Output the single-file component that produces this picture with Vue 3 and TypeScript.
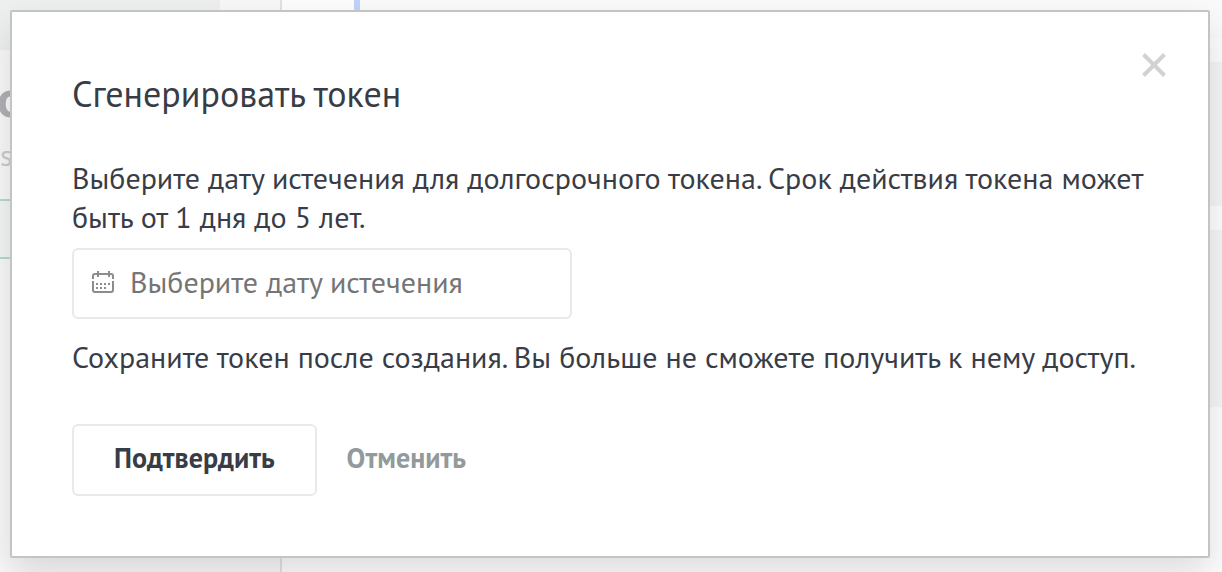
<script setup lang="ts">
import { ref } from 'vue'

const expiry = ref('')
const open = ref(true)
</script>

<template>
  <div class="page">
    <div class="backdrop" aria-hidden="true">
      <div class="sidebar">
        <div class="sidebar-head"></div>
        <div class="sidebar-title">о</div>
        <div class="sidebar-sub">s</div>
        <div class="sidebar-active"></div>
      </div>
      <div class="content">
        <div class="tab-mark"></div>
        <div class="cards">
          <div class="card card-top"></div>
          <div class="card card-first"></div>
          <div class="card card-second"></div>
        </div>
      </div>
    </div>

    <section v-if="open" class="dialog" role="dialog" aria-modal="true" aria-labelledby="dialog-title">
      <button class="close" type="button" aria-label="Закрыть" @click="open = false">
        <svg width="24" height="26" viewBox="0 0 24 26" fill="none" stroke="#d3d2d0" stroke-width="4">
          <path d="M1.5 2.5 22.5 23.5M22.5 2.5 1.5 23.5" />
        </svg>
      </button>
      <h1 id="dialog-title">Сгенерировать токен</h1>
      <label class="intro" for="expiry">Выберите дату истечения для долгосрочного токена. Срок действия токена может быть от 1 дня до 5 лет.</label>
      <div class="field">
        <svg width="22" height="22" viewBox="0 0 22 22" fill="none" stroke="#8c8c8c" stroke-width="2">
          <path d="M1 8V5Q1 3 3 3H19Q21 3 21 5V8M1 10V19Q1 21 3 21H19Q21 21 21 19V10M6 0V6M17 0V6" />
          <path stroke-dasharray="2 2" d="M4 13H18M4 17H14" />
        </svg>
        <input id="expiry" v-model="expiry" type="text" placeholder="Выберите дату истечения" />
      </div>
      <p class="note">Сохраните токен после создания. Вы больше не сможете получить к нему доступ.</p>
      <div class="actions">
        <button class="confirm" type="button">Подтвердить</button>
        <button class="cancel" type="button" @click="open = false">Отменить</button>
      </div>
    </section>
  </div>
</template>

<style>
body {
  background: #f4f4f4;
}
</style>

<style scoped>
* {
  box-sizing: border-box;
}
.page {
  position: relative;
  min-height: 100vh;
  padding: 10px 12px 14px 10px;
  overflow: hidden;
  font-family: "PT Sans", "Noto Sans", sans-serif;
  color: #383c46;
}
.backdrop {
  position: absolute;
  inset: 0;
  display: flex;
}
.sidebar {
  width: 282px;
  border-right: 2px solid #e2e2e2;
  background: #f8f8f8;
}
.sidebar-head {
  width: 220px;
  height: 50px;
  background: #edf0ee;
}
.sidebar-title {
  height: 85px;
  padding-top: 18px;
  font-size: 52px;
  font-weight: 700;
  line-height: 60px;
  text-indent: -3px;
  color: #afb0b4;
}
.sidebar-sub {
  height: 64px;
  font-size: 30px;
  line-height: 40px;
  color: #cbcbcb;
}
.sidebar-active {
  height: 60px;
  border: solid #b3dcca;
  border-width: 2px 0;
  background: #f2f5f4;
}
.content {
  flex: 1;
  display: flex;
  background: #fdfdfd;
}
.tab-mark {
  width: 6px;
  height: 50px;
  margin-left: 72px;
  background: #bfd3fa;
}
.cards {
  flex: 1;
  display: flex;
  flex-direction: column;
  gap: 24px;
}
.card {
  background: #f5f5f5;
}
.card-top {
  height: 38px;
  background: #fafafa;
}
.card-first {
  height: 144px;
}
.card-second {
  height: 177px;
}
.dialog {
  position: relative;
  min-height: 548px;
  padding: 57px 60px 60px;
  border: 2px solid #c4c4c4;
  border-radius: 2px;
  background: #fff;
  box-shadow: 0 16px 36px rgba(0, 0, 0, 0.13);
}
.close {
  position: absolute;
  top: 40px;
  right: 42px;
  padding: 0;
  border: 0;
  background: none;
  line-height: 0;
  cursor: pointer;
}
h1 {
  margin: 0 0 39px;
  font-size: 36px;
  font-weight: 400;
  line-height: 50px;
}
.intro {
  display: block;
  font-size: 30px;
  line-height: 39px;
}
.field {
  display: flex;
  align-items: center;
  gap: 16px;
  width: 500px;
  max-width: 100%;
  height: 71px;
  margin-top: 12px;
  padding: 0 18px 4px;
  border: 2px solid #e9e9e9;
  border-radius: 6px;
}
.field input {
  flex: 1;
  min-width: 0;
  padding: 0;
  border: 0;
  outline: 0;
  background: none;
  font: inherit;
  font-size: 30px;
  color: inherit;
}
.field input::placeholder {
  color: #757575;
  opacity: 1;
}
.note {
  margin: 18px 0 48px;
  font-size: 30px;
  line-height: 39px;
}
.actions {
  display: flex;
  align-items: center;
  gap: 30px;
}
.actions button {
  font-family: inherit;
  font-size: 28px;
  font-weight: 700;
  cursor: pointer;
}
.confirm {
  height: 72px;
  padding: 0 40px 5px;
  border: 2px solid #e9e9e9;
  border-radius: 6px;
  background: #fff;
  color: #383c46;
}
.cancel {
  padding: 0 0 5px;
  border: 0;
  background: none;
  color: #929a9b;
}
</style>
